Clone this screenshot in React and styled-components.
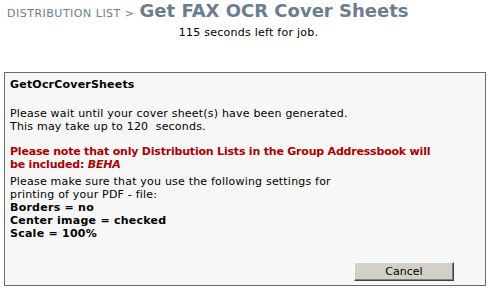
import React from "react";
import styled, { createGlobalStyle } from "styled-components";

const GlobalStyle = createGlobalStyle`
  body {
    margin: 0;
    background: #ffffff;
    font-family: Verdana, "DejaVu Sans", sans-serif;
    font-size: 11px;
    color: #000000;
  }
`;

const Header = styled.div`
  display: flex;
  align-items: baseline;
  padding: 0 7px;
  height: 21px;
  white-space: nowrap;
`;

const Crumb = styled.span`
  font-size: 11px;
  color: #6f7e8c;
  letter-spacing: 0.5px;
`;

const Title = styled.h1`
  margin: 0 0 0 5px;
  font-size: 18px;
  line-height: 21px;
  font-weight: bold;
  color: #6b7d8f;
`;

const Timer = styled.div`
  text-align: center;
  line-height: 13px;
  padding-top: 5px;
  letter-spacing: 0.25px;
`;

const Panel = styled.div`
  margin: 33px 0 0 4px;
  width: 482px;
  height: 214px;
  border: 1px solid #6b6b6b;
  background: #f7f7f7;
  padding: 5px 5px 4px 5px;
  box-sizing: border-box;
  display: flex;
  flex-direction: column;
`;

const Heading = styled.div`
  font-weight: bold;
  line-height: 13px;
  letter-spacing: 0.2px;
  margin-bottom: 16px;
`;

const Para = styled.p`
  margin: 0 0 ${({ gap }) => gap || 0}px 0;
  line-height: 13px;
  white-space: nowrap;
  font-weight: ${({ strong }) => (strong ? "bold" : "normal")};
  color: ${({ warn }) => (warn ? "#a80000" : "#000000")};
  letter-spacing: ${({ warn, strong }) =>
    warn ? "-0.2px" : strong ? "0.25px" : "0.2px"};
`;

const Name = styled.i`
  font-style: italic;
`;

const Footer = styled.div`
  margin-top: auto;
  display: flex;
  justify-content: flex-end;
  padding-right: 26px;
`;

const Button = styled.button`
  width: 100px;
  height: 19px;
  padding: 0;
  font-family: Tahoma, "DejaVu Sans", sans-serif;
  font-size: 11px;
  background: #d4d0c8;
  color: #000000;
  border: 1px solid;
  border-color: #ffffff #404040 #404040 #ffffff;
  box-shadow: inset -1px -1px 0 #808080;
`;

export default function App() {
  return (
    <>
      <GlobalStyle />
      <Header>
        <Crumb>DISTRIBUTION LIST &gt;</Crumb>
        <Title>Get FAX OCR Cover Sheets</Title>
      </Header>
      <Timer>115 seconds left for job.</Timer>
      <Panel>
        <Heading>GetOcrCoverSheets</Heading>
        <Para>Please wait until your cover sheet(s) have been generated.</Para>
        <Para gap={12}>This may take up to 120&nbsp; seconds.</Para>
        <Para strong warn>
          Please note that only Distribution Lists in the Group Addressbook will
        </Para>
        <Para strong warn gap={4}>
          be included: <Name>BEHA</Name>
        </Para>
        <Para>Please make sure that you use the following settings for</Para>
        <Para>printing of your PDF - file:</Para>
        <Para strong>Borders = no</Para>
        <Para strong>Center image = checked</Para>
        <Para strong>Scale = 100%</Para>
        <Footer>
          <Button>Cancel</Button>
        </Footer>
      </Panel>
    </>
  );
}
